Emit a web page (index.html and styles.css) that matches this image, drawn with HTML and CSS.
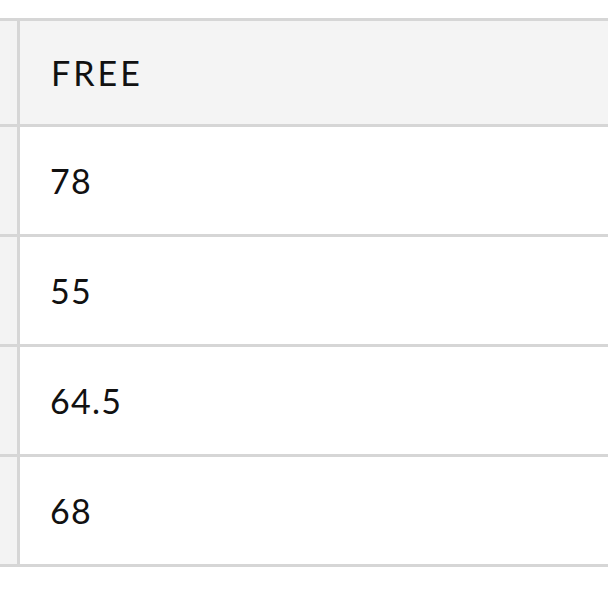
FILE: index.html
```html
<!DOCTYPE html>
<html>
<head>
<meta charset="utf-8">
<link rel="stylesheet" href="styles.css">
</head>
<body>
<div class="table">
  <div class="row head">
    <div class="side"></div>
    <div class="cell">FREE</div>
  </div>
  <div class="row">
    <div class="side"></div>
    <div class="cell">78</div>
  </div>
  <div class="row">
    <div class="side"></div>
    <div class="cell">55</div>
  </div>
  <div class="row">
    <div class="side"></div>
    <div class="cell">64.5</div>
  </div>
  <div class="row">
    <div class="side"></div>
    <div class="cell">68</div>
  </div>
</div>
</body>
</html>
```
FILE: styles.css
```css
html, body {
  margin: 0;
  padding: 0;
  background: #ffffff;
}
body {
  padding-top: 18px;
  font-family: "Lato", "Noto Sans", sans-serif;
  color: #111111;
}
.table {
  border-top: 3px solid #d6d6d6;
}
.row {
  display: flex;
  border-bottom: 3px solid #d6d6d6;
  height: 107px;
}
.row.head {
  height: 103px;
}
.side {
  width: 17px;
  background: #f3f3f3;
  border-right: 3px solid #d6d6d6;
}
.cell {
  flex: 1;
  display: flex;
  align-items: center;
  padding-left: 30px;
  font-size: 34px;
  letter-spacing: 1.3px;
  background: #ffffff;
}
.head .cell {
  background: #f4f4f4;
  letter-spacing: 3px;
  padding-left: 31px;
}
```
